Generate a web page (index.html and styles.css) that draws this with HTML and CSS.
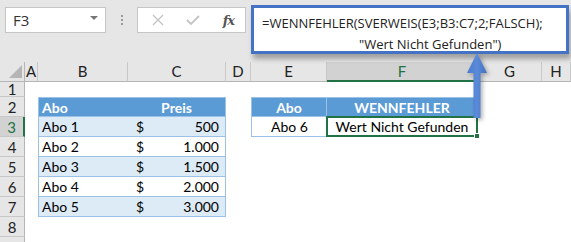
FILE: index.html
```html
<!DOCTYPE html>
<html lang="de">
<head>
  <meta charset="UTF-8" />
  <title>WENNFEHLER SVERWEIS</title>
  <link rel="stylesheet" href="styles.css">
</head>
<body>
  <div class="toolbar">
    <div class="namebox">
      <span>F3</span>
      <span class="caret"></span>
    </div>
    <div class="dots"><i></i><i></i><i></i></div>
    <div class="fxbox">
      <svg class="icon" width="12" height="12" viewBox="0 0 12 12"><path d="M1 1 L11 11 M11 1 L1 11" stroke="#c4c4c4" stroke-width="1.4" fill="none"/></svg>
      <svg class="icon" width="14" height="12" viewBox="0 0 14 12"><path d="M1 6 L5 10 L13 2" stroke="#c4c4c4" stroke-width="1.8" fill="none"/></svg>
      <span class="fx">fx</span>
    </div>
  </div>

  <div class="callout">
    <div>=WENNFEHLER(SVERWEIS(E3;B3:C7;2;FALSCH);</div>
    <div class="indent">"Wert Nicht Gefunden")</div>
  </div>

  <svg class="arrow" width="26" height="70" viewBox="0 0 26 70">
    <defs>
      <linearGradient id="ag" x1="0" x2="1" y1="0" y2="0">
        <stop offset="0" stop-color="#4a7bd0"/>
        <stop offset="0.5" stop-color="#5a8ad8"/>
        <stop offset="1" stop-color="#4370c2"/>
      </linearGradient>
    </defs>
    <path d="M12 1 L22 21 L15.5 21 L15.5 66 L8.5 66 L8.5 21 L2 21 Z" fill="url(#ag)"/>
  </svg>

  <div class="sheet">
    <div class="corner"><span class="tri"></span></div>
    <div class="colhead">A</div>
    <div class="colhead">B</div>
    <div class="colhead">C</div>
    <div class="colhead">D</div>
    <div class="colhead">E</div>
    <div class="colhead active">F</div>
    <div class="colhead">G</div>
    <div class="colhead">H</div>

    <div class="rowhead r1">1</div>
    <div class="rowhead r2">2</div>
    <div class="rowhead r3 active">3</div>
    <div class="rowhead r4">4</div>
    <div class="rowhead r5">5</div>
    <div class="rowhead r6">6</div>
    <div class="rowhead r7">7</div>
    <div class="rowhead r8">8</div>
    <div class="rowhead r9"></div>

    <div class="cell r2 cb thead tl">Abo</div>
    <div class="cell r2 cc thead tr center">Preis</div>

    <div class="cell r3 cb stripe tl">Abo 1</div>
    <div class="cell r3 cc stripe tr money"><span>$</span><span>500</span></div>
    <div class="cell r4 cb tl">Abo 2</div>
    <div class="cell r4 cc tr money"><span>$</span><span>1.000</span></div>
    <div class="cell r5 cb stripe tl">Abo 3</div>
    <div class="cell r5 cc stripe tr money"><span>$</span><span>1.500</span></div>
    <div class="cell r6 cb tl">Abo 4</div>
    <div class="cell r6 cc tr money"><span>$</span><span>2.000</span></div>
    <div class="cell r7 cb stripe tl">Abo 5</div>
    <div class="cell r7 cc stripe tr money"><span>$</span><span>3.000</span></div>

    <div class="cell r2 ce thead tl center sep">Abo</div>
    <div class="cell r2 cf thead tr center">WENNFEHLER</div>
    <div class="cell r3 ce tl center">Abo 6</div>
    <div class="cell r3 cf tr center selected">Wert Nicht Gefunden<span class="handle"></span></div>
  </div>
</body>
</html>
```

FILE: styles.css
```css
* {
  margin: 0;
  padding: 0;
  box-sizing: border-box;
}

body {
  width: 571px;
  height: 242px;
  overflow: hidden;
  position: relative;
  background: #ffffff;
  font-family: 'Lato', 'Carlito', sans-serif;
  color: #000;
}

.toolbar {
  height: 62px;
  background: #e6e6e6;
  display: flex;
  align-items: flex-start;
  padding: 7px 0 0 5px;
}

.namebox {
  width: 101px;
  height: 26px;
  background: #fff;
  border: 1px solid #c6c6c6;
  display: flex;
  align-items: center;
  justify-content: space-between;
  padding: 0 7px 0 7px;
  font-family: 'Open Sans', sans-serif;
  font-size: 15px;
  color: #333;
}

.caret {
  width: 0;
  height: 0;
  border-left: 4px solid transparent;
  border-right: 4px solid transparent;
  border-top: 4px solid #777;
  margin-bottom: 4px;
}

.dots {
  width: 31px;
  height: 26px;
  display: flex;
  flex-direction: column;
  align-items: center;
  justify-content: center;
  gap: 2px;
}

.dots i {
  width: 2px;
  height: 2px;
  background: #9a9a9a;
}

.fxbox {
  width: 109px;
  height: 26px;
  background: #fff;
  border: 1px solid #c6c6c6;
  display: flex;
  align-items: center;
  justify-content: space-between;
  padding: 0 11px 0 14px;
}

.fx {
  font-family: 'DejaVu Serif', serif;
  font-style: italic;
  font-weight: bold;
  font-size: 13px;
  color: #555;
  letter-spacing: -1px;
}

.callout {
  position: absolute;
  left: 251px;
  top: 5px;
  width: 318px;
  height: 49px;
  background: #fff;
  border: 3px solid #4472c4;
  box-shadow: 2px 5px 5px rgba(0, 0, 0, 0.3);
  padding: 5px 0 0 8px;
  font-family: 'Open Sans', sans-serif;
  font-size: 13px;
  line-height: 21px;
  color: #222;
  z-index: 2;
}

.callout .indent {
  padding-left: 97px;
}

.arrow {
  position: absolute;
  left: 465px;
  top: 52px;
  z-index: 3;
  filter: drop-shadow(2px 2px 2px rgba(0, 0, 0, 0.3));
}

.sheet {
  display: grid;
  grid-template-columns: 25px 13px 90px 98px 25px 76px 151px 64px 29px;
  grid-template-rows: 20px 15px repeat(7, 20px) 6px;
  font-size: 14px;
}

.corner {
  background: #e6e6e6;
  border-right: 1px solid #b5b5b5;
  border-bottom: 1px solid #b5b5b5;
  position: relative;
}

.tri {
  position: absolute;
  right: 2px;
  bottom: 3px;
  width: 0;
  height: 0;
  border-left: 13px solid transparent;
  border-bottom: 13px solid #b5b5b5;
}

.colhead {
  background: #e6e6e6;
  border-right: 1px solid #c8c8c8;
  border-bottom: 1px solid #b5b5b5;
  text-align: center;
  line-height: 19px;
  font-size: 15px;
  color: #222;
}

.colhead.active {
  background: #d2d2d2;
  color: #217346;
  border-bottom: 2px solid #217346;
}

.rowhead {
  grid-column: 1;
  background: #e6e6e6;
  border-right: 1px solid #b5b5b5;
  border-bottom: 1px solid #c8c8c8;
  text-align: center;
  display: flex;
  align-items: center;
  justify-content: center;
  font-size: 15px;
  color: #222;
}

.rowhead.active {
  background: #d2d2d2;
  color: #217346;
  border-right: 2px solid #217346;
}

.r1 { grid-row: 2; }
.r2 { grid-row: 3; }
.r3 { grid-row: 4; }
.r4 { grid-row: 5; }
.r5 { grid-row: 6; }
.r6 { grid-row: 7; }
.r7 { grid-row: 8; }
.r8 { grid-row: 9; }
.r9 { grid-row: 10; }

.cb { grid-column: 3; }
.cc { grid-column: 4; }
.ce { grid-column: 6; }
.cf { grid-column: 7; }

.cell {
  border-bottom: 1px solid #9bc2e6;
  display: flex;
  align-items: center;
  padding: 0 3px;
  white-space: nowrap;
  position: relative;
}

.r2.cell {
  border-top: 1px solid #9bc2e6;
}

.tl { border-left: 1px solid #9bc2e6; }
.tr { border-right: 1px solid #9bc2e6; }

.thead {
  background: #5b9bd5;
  color: #fff;
  font-weight: bold;
}

.sep {
  border-right: 1px solid #9bc2e6;
}

.stripe {
  background: #ddebf7;
}

.center {
  justify-content: center;
}

.money {
  justify-content: space-between;
  padding: 0 6px 0 8px;
}

.selected {
  border: 2px solid #217346;
  margin: -1px 0 0 -1px;
}

.handle {
  position: absolute;
  right: -4px;
  bottom: -4px;
  width: 6px;
  height: 6px;
  background: #217346;
  border: 1px solid #fff;
}
```
